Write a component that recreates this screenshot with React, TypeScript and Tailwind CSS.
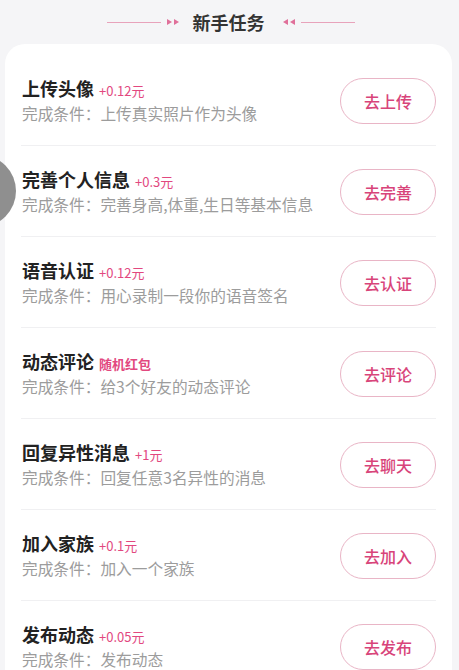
import React from 'react';

const TASKS = [
  { title: '上传头像', reward: '+0.12元', desc: '上传真实照片作为头像', action: '去上传' },
  { title: '完善个人信息', reward: '+0.3元', desc: '完善身高,体重,生日等基本信息', action: '去完善' },
  { title: '语音认证', reward: '+0.12元', desc: '用心录制一段你的语音签名', action: '去认证' },
  { title: '动态评论', reward: '随机红包', desc: '给3个好友的动态评论', action: '去评论', bold: true },
  { title: '回复异性消息', reward: '+1元', desc: '回复任意3名异性的消息', action: '去聊天' },
  { title: '加入家族', reward: '+0.1元', desc: '加入一个家族', action: '去加入' },
  { title: '发布动态', reward: '+0.05元', desc: '发布动态', action: '去发布' },
];

const Arrows = ({ flip }: { flip?: boolean }) => (
  <svg width="15" height="8" viewBox="0 0 15 8" className={flip ? 'rotate-180' : ''}>
    <path d="M1 1 L6 4 L1 7 Z" fill="#e0709a" />
    <path d="M8 1 L13 4 L8 7 Z" fill="#e0709a" />
  </svg>
);

export default function App() {
  return (
    <div
      className="relative w-[459px] h-[670px] overflow-hidden bg-[#f5f5f7]"
      style={{ fontFamily: '"Noto Sans CJK SC", "Noto Sans", sans-serif' }}
    >
      <div className="h-[44px] flex items-center justify-center pl-[2px]">
        <div className="w-[54px] h-px bg-[#e8a3bb]" />
        <div className="ml-[5px]"><Arrows /></div>
        <div className="ml-[12px] mr-[16px] text-[18px] leading-[22px] font-bold text-[#333]">新手任务</div>
        <Arrows flip />
        <div className="ml-[5px] w-[54px] h-px bg-[#e8a3bb]" />
      </div>

      <div className="ml-[5px] mr-[7px] bg-white rounded-t-[20px] px-[16px] pt-[11px]">
        {TASKS.map((t, i) => (
          <div
            key={t.title}
            className={`flex items-center justify-between pt-[22px] pb-[21px] ${i < TASKS.length - 1 ? 'border-b border-[#f0f0f2]' : ''}`}
          >
            <div className="pl-[1px]">
              <div className="flex items-baseline h-[22px]">
                <span className="text-[18px] leading-[22px] font-bold text-[#222]">{t.title}</span>
                <span className={`ml-[5px] text-[13px] leading-[22px] text-[#e2487f] ${t.bold ? 'font-bold' : ''}`}>{t.reward}</span>
              </div>
              <div className="mt-[5px] text-[15.7px] leading-[20px] text-[#9c9c9c] whitespace-nowrap">
                完成条件：{t.desc}
              </div>
            </div>
            <button className="w-[96px] h-[46px] -my-[1px] shrink-0 rounded-full border border-[#e9b5c6] text-[16px] leading-[20px] font-medium text-[#d8447a] flex items-center justify-center">
              {t.action}
            </button>
          </div>
        ))}
      </div>

      <div className="absolute left-[-56px] top-[155px] w-[72px] h-[72px] rounded-full bg-[#8f8f8f]" />
    </div>
  );
}
